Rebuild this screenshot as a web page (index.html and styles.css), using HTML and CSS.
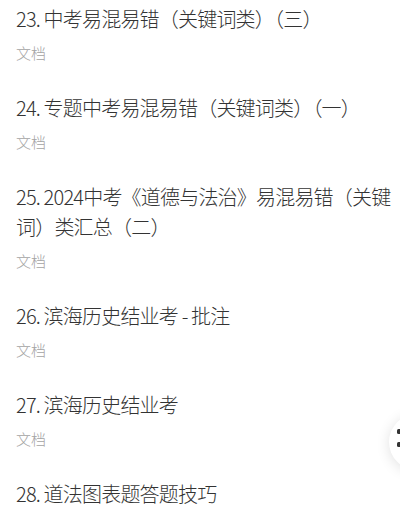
FILE: index.html
```html
<!DOCTYPE html>
<html lang="zh-CN">
<head>
<meta charset="utf-8">
<link rel="stylesheet" href="styles.css">
</head>
<body>
<ul class="list">
  <li class="item"><div class="title">23. 中考易混易错（关键词类）（三）</div><div class="meta">文档</div></li>
  <li class="item"><div class="title">24. 专题中考易混易错（关键词类）（一）</div><div class="meta">文档</div></li>
  <li class="item"><div class="title">25. 2024中考《道德与法治》易混易错（关键词）类汇总（二）</div><div class="meta">文档</div></li>
  <li class="item"><div class="title">26. 滨海历史结业考 - 批注</div><div class="meta">文档</div></li>
  <li class="item"><div class="title">27. 滨海历史结业考</div><div class="meta">文档</div></li>
  <li class="item"><div class="title">28. 道法图表题答题技巧</div></li>
</ul>
<div class="fab">
  <svg class="fab-icon" width="10" height="24" viewBox="0 0 10 24"><rect x="0" y="0" width="8" height="5" rx="1.5" fill="#333"/><rect x="0" y="13" width="8" height="5" rx="1.5" fill="#333"/></svg>
</div>
</body>
</html>
```
FILE: styles.css
```css
html, body {
  margin: 0;
  padding: 0;
  background: #fff;
  width: 400px;
  height: 514px;
  overflow: hidden;
}
body {
  position: relative;
  font-family: "Noto Sans CJK SC", "Noto Sans", sans-serif;
}
.list {
  list-style: none;
  margin: 0;
  padding: 4px 0 0 16px;
  width: 384px;
  display: flex;
  flex-direction: column;
}
.item {
  padding-bottom: 29px;
}
.title {
  font-size: 20px;
  line-height: 30px;
  font-weight: 300;
  letter-spacing: -0.8px;
  color: #333;
}
.meta {
  margin-top: 8px;
  font-size: 15px;
  line-height: 22px;
  font-weight: 300;
  color: #a3a3a3;
}
.fab {
  position: absolute;
  left: 389px;
  top: 414px;
  width: 56px;
  height: 56px;
  border-radius: 50%;
  background: #fff;
  box-shadow: 0 2px 14px rgba(0, 0, 0, 0.12);
}
.fab-icon {
  position: absolute;
  left: 8px;
  top: 15px;
}
```
